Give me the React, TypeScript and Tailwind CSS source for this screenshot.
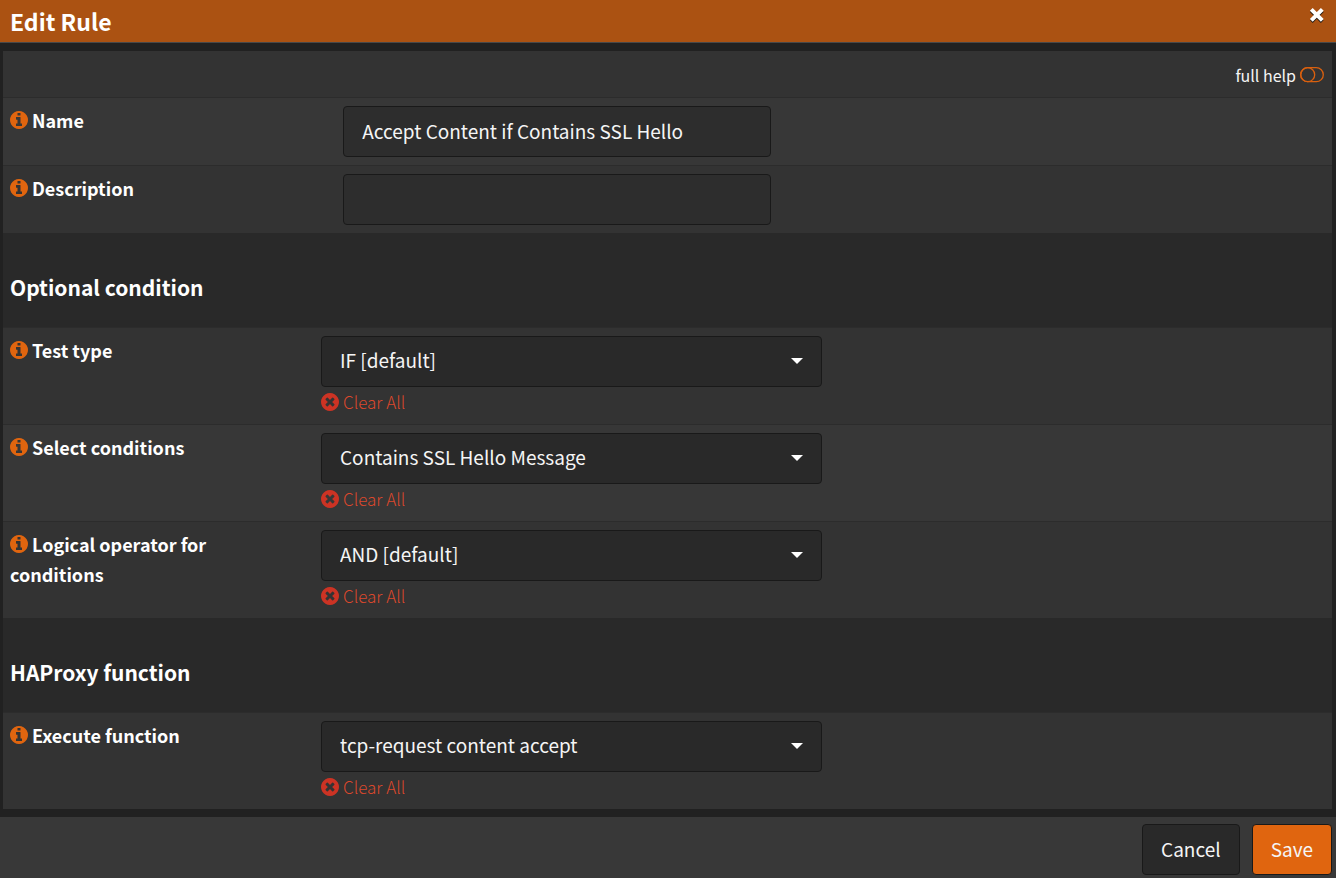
import { useState } from "react";

function InfoIcon() {
  return (
    <svg viewBox="128 128 1536 1536" className="mr-1 inline-block size-[18px] fill-[#e0650f] align-[-1px]">
      <path d="M1152 1376v-160q0-14-9-23t-23-9h-96v-512q0-14-9-23t-23-9h-320q-14 0-23 9t-9 23v160q0 14 9 23t23 9h96v320h-96q-14 0-23 9t-9 23v160q0 14 9 23t23 9h448q14 0 23-9t9-23zm-128-896v-160q0-14-9-23t-23-9h-192q-14 0-23 9t-9 23v160q0 14 9 23t23 9h192q14 0 23-9t9-23zm640 416q0 209-103 385.5t-279.5 279.5-385.5 103-385.5-103-279.5-279.5-103-385.5 103-385.5 279.5-279.5 385.5-103 385.5 103 279.5 279.5 103 385.5z" />
    </svg>
  );
}

function ClearIcon() {
  return (
    <svg viewBox="128 128 1536 1536" className="size-[18px] fill-[#cc3324]">
      <path d="M1277 1122q0-26-19-45l-181-181 181-181q19-19 19-45 0-27-19-46l-90-90q-19-19-46-19-26 0-45 19l-181 181-181-181q-19-19-45-19-27 0-46 19l-90 90q-19 19-19 46 0 26 19 45l181 181-181 181q-19 19-19 45 0 27 19 46l90 90q19 19 46 19 26 0 45-19l181-181 181 181q19 19 45 19 27 0 46-19l90-90q19-19 19-46zm387-226q0 209-103 385.5t-279.5 279.5-385.5 103-385.5-103-279.5-279.5-103-385.5 103-385.5 279.5-279.5 385.5-103 385.5 103 279.5 279.5 103 385.5z" />
    </svg>
  );
}

function InfoLabel({ id, text }: { id: string; text: string }) {
  return (
    <label htmlFor={id} className="block max-w-[260px] pt-[7px] pl-[7px] text-[18px] leading-[30px] font-bold text-white">
      <InfoIcon />
      {text}
    </label>
  );
}

function TextRow({ id, label, value, striped }: { id: string; label: string; value: string; striped?: boolean }) {
  return (
    <div className={`grid grid-cols-[25%_1fr] border-t border-[#2c2c2c] ${striped ? "bg-[#373737]" : "bg-[#333333]"}`}>
      <InfoLabel id={id} text={label} />
      <div className="p-2">
        <input
          id={id}
          type="text"
          defaultValue={value}
          className="block h-[51px] w-full max-w-[428px] rounded border border-[#191919] bg-[#2d2d2d] px-[18px] pb-0.5 text-[19px] text-[#f5f5f5] outline-none"
        />
      </div>
    </div>
  );
}

function SelectRow({ id, label, options, striped }: { id: string; label: string; options: string[]; striped?: boolean }) {
  const [value, setValue] = useState(options[0]);

  return (
    <div className={`grid grid-cols-[310px_1fr] border-t border-[#2c2c2c] ${striped ? "bg-[#373737]" : "bg-[#333333]"}`}>
      <InfoLabel id={id} text={label} />
      <div className="p-2">
        <div className="relative max-w-[501px]">
          <select
            id={id}
            value={value}
            onChange={(e) => setValue(e.target.value)}
            className="block h-[51px] w-full appearance-none rounded border border-[#191919] bg-[#292929] pr-12 pb-0.5 pl-[18px] text-[19px] text-[#f5f5f5] outline-none"
          >
            <option value="" hidden>
              Nothing selected
            </option>
            {options.map((o) => (
              <option key={o}>{o}</option>
            ))}
          </select>
          <svg viewBox="0 0 12 6" className="pointer-events-none absolute top-[22px] right-[19px] h-1.5 w-3 fill-white">
            <path d="M0 0h12L6 6z" />
          </svg>
        </div>
        <a
          href="#"
          onClick={(e) => {
            e.preventDefault();
            setValue("");
          }}
          className="flex h-[29px] w-fit items-center gap-1 text-[17px] font-light text-[#dc482c]"
        >
          <ClearIcon />
          <span>Clear All</span>
        </a>
      </div>
    </div>
  );
}

function Section({ title }: { title: string }) {
  return (
    <div className="flex h-[94px] items-center bg-[#292929] pt-3.5 pl-[7px]">
      <h3 className="text-[21px] leading-6 font-bold text-white">{title}</h3>
    </div>
  );
}

export default function App() {
  return (
    <div
      role="dialog"
      aria-labelledby="title"
      className="flex min-h-screen flex-col bg-[#212121] font-['Noto_Sans_CJK_SC',sans-serif]"
    >
      <header className="flex h-[43px] items-start justify-between border-b border-[#484848] bg-[#ab5212] pr-[11px] pl-2.5">
        <h4 id="title" className="text-[23px] leading-[42px] font-bold text-white">
          Edit Rule
        </h4>
        <button type="button" aria-label="Close" className="pt-[7px]">
          <svg viewBox="0 0 16 17" className="h-[17px] w-4" strokeWidth="4" fill="none">
            <path d="M2.3 3.5l11 11M13.3 3.5l-11 11" stroke="#221a14" />
            <path d="M2.3 2.3l11 11M13.3 2.3l-11 11" stroke="#fff" />
          </svg>
        </button>
      </header>

      <form className="my-2 mr-1 ml-[3px]" onSubmit={(e) => e.preventDefault()}>
        <div className="flex h-[46px] items-center justify-end bg-[#333333] pt-0.5 pr-2">
          <a href="#" className="flex items-center gap-1 text-base text-[#f5f5f5]">
            full help
            <svg viewBox="0 0 24 16" className="h-4 w-6" fill="none" stroke="#d9600f" strokeWidth="1.3">
              <rect x="0.7" y="0.7" width="22.6" height="14" rx="7" />
              <circle cx="7.7" cy="7.7" r="7" />
            </svg>
          </a>
        </div>
        <TextRow id="name" label="Name" value="Accept Content if Contains SSL Hello" striped />
        <TextRow id="description" label="Description" value="" />

        <Section title="Optional condition" />
        <SelectRow id="test-type" label="Test type" options={["IF [default]", "UNLESS"]} />
        <SelectRow id="conditions" label="Select conditions" options={["Contains SSL Hello Message"]} striped />
        <SelectRow id="operator" label="Logical operator for conditions" options={["AND [default]", "OR"]} />

        <Section title="HAProxy function" />
        <SelectRow id="function" label="Execute function" options={["tcp-request content accept"]} />
      </form>

      <footer className="flex grow items-start justify-end gap-3 bg-[#383838] pt-[7px] pr-1 pb-[3px] text-[19px] text-[#f5f5f5]">
        <button type="button" className="h-[51px] rounded border border-[#191919] bg-[#292929] px-[18px]">
          Cancel
        </button>
        <button type="button" className="h-[51px] rounded border border-[#191919] bg-[#e0650f] px-[18px]">
          Save
        </button>
      </footer>
    </div>
  );
}
